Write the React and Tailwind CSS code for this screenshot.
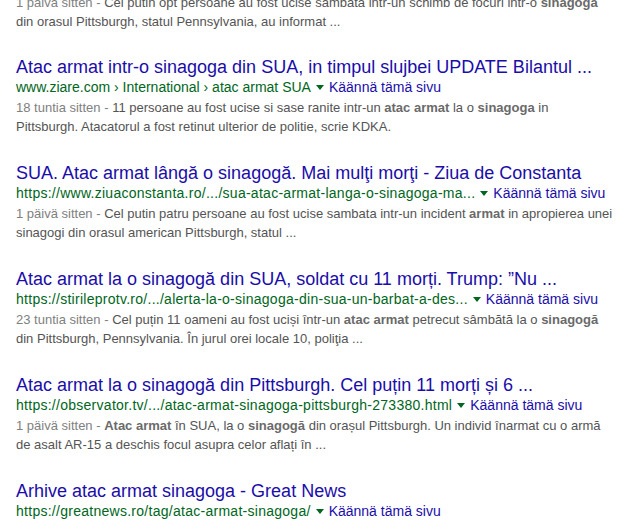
const results = [
  {
    title: 'Atac armat intr-o sinagoga din SUA, in timpul slujbei UPDATE Bilantul ...',
    url: ['www.ziare.com', 'International', 'atac armat SUA'],
    date: '18 tuntia sitten',
    lines: [
      ['11 persoane au fost ucise si sase ranite intr-un ', { b: 'atac armat' }, ' la o ', { b: 'sinagoga' }, ' in'],
      ['Pittsburgh. Atacatorul a fost retinut ulterior de politie, scrie KDKA.'],
    ],
  },
  {
    title: 'SUA. Atac armat lângă o sinagogă. Mai mulţi morţi - Ziua de Constanta',
    url: ['https://www.ziuaconstanta.ro/.../sua-atac-armat-langa-o-sinagoga-ma...'],
    date: '1 päivä sitten',
    lines: [
      ['Cel putin patru persoane au fost ucise sambata intr-un incident ', { b: 'armat' }, ' in apropierea unei'],
      ['sinagogi din orasul american Pittsburgh, statul ...'],
    ],
  },
  {
    title: 'Atac armat la o sinagogă din SUA, soldat cu 11 morți. Trump: ”Nu ...',
    url: ['https://stirileprotv.ro/.../alerta-la-o-sinagoga-din-sua-un-barbat-a-des...'],
    date: '23 tuntia sitten',
    lines: [
      ['Cel puțin 11 oameni au fost uciși într-un ', { b: 'atac armat' }, ' petrecut sâmbătă la o ', { b: 'sinagogă' }],
      ['din Pittsburgh, Pennsylvania. În jurul orei locale 10, poliţia ...'],
    ],
  },
  {
    title: 'Atac armat la o sinagogă din Pittsburgh. Cel puțin 11 morți și 6 ...',
    url: ['https://observator.tv/.../atac-armat-sinagoga-pittsburgh-273380.html'],
    date: '1 päivä sitten',
    lines: [
      [{ b: 'Atac armat' }, ' în SUA, la o ', { b: 'sinagogă' }, ' din orașul Pittsburgh. Un individ înarmat cu o armă'],
      ['de asalt AR-15 a deschis focul asupra celor aflați în ...'],
    ],
  },
  {
    title: 'Arhive atac armat sinagoga - Great News',
    url: ['https://greatnews.ro/tag/atac-armat-sinagoga/'],
    lines: [],
  },
];

const Snippet = ({ date, lines }) => (
  <div className="text-[13px] leading-[19px] text-[#545454] whitespace-nowrap">
    {date && <span className="text-[#808080]">{date} - </span>}
    {lines.map((line, i) => (
      <span key={i}>
        {line.map((part, j) =>
          typeof part === 'string' ? (
            <span key={j}>{part}</span>
          ) : (
            <b key={j} className="font-bold text-[#6a6a6a]">
              {part.b}
            </b>
          )
        )}
        {i < lines.length - 1 && <br />}
      </span>
    ))}
  </div>
);

const Result = ({ title, url, date, lines }) => {
  // full https urls render a bit wider in the original (lots of / - .)
  const longUrl = url[0].startsWith('https');
  return (
    <div className="mt-[25px]">
      <a className="block text-[18px] leading-[24px] text-[#1a0dab] whitespace-nowrap cursor-pointer hover:underline">
        {title}
      </a>
      <div className="flex items-center text-[14px] leading-[16px] whitespace-nowrap">
        <cite className={longUrl ? 'not-italic text-[#006621] tracking-[0.27px]' : 'not-italic text-[#006621]'}>
          {url.map((u, i) => (
            <span key={i}>
              {i > 0 && ' › '}
              {u}
            </span>
          ))}
        </cite>
        <span className="inline-block w-0 h-0 ml-[5px] mt-[1px] border-x-[4px] border-x-transparent border-t-[5px] border-t-[#006621]" />
        <a className="ml-[5px] text-[#1a0dab] cursor-pointer">Käännä tämä sivu</a>
      </div>
      {lines.length > 0 && (
        <div className="mt-[3px]">
          <Snippet date={date} lines={lines} />
        </div>
      )}
    </div>
  );
};

export default function App() {
  return (
    <div
      className="w-[632px] h-[525px] overflow-hidden bg-white pl-[16px]"
      style={{ fontFamily: '"Liberation Sans", Arial, sans-serif' }}
    >
      <div className="-mt-[7px] -mb-[1px]">
        <Snippet
          date="1 päivä sitten"
          lines={[
            ['Cel putin opt persoane au fost ucise sambata intr-un schimb de focuri intr-o ', { b: 'sinagoga' }],
            ['din orasul Pittsburgh, statul Pennsylvania, au informat ...'],
          ]}
        />
      </div>
      {results.map((r, i) => (
        <Result key={i} {...r} />
      ))}
    </div>
  );
}
